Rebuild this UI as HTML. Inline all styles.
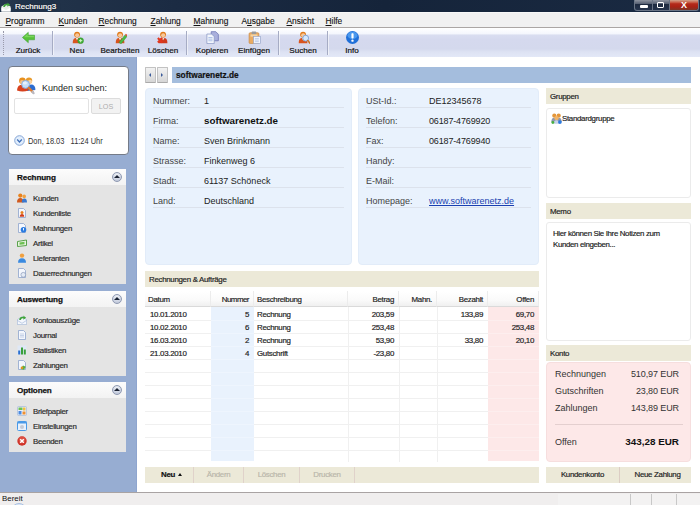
<!DOCTYPE html>
<html>
<head>
<meta charset="utf-8">
<title>Rechnung3</title>
<style>
*{box-sizing:border-box;margin:0;padding:0}
html,body{width:700px;height:505px;overflow:hidden;background:#fff}
body{font-family:"Liberation Sans",sans-serif;font-size:8px;color:#222;position:relative}
.abs{position:absolute}
.t{font-size:7.9px;letter-spacing:-.3px;white-space:nowrap;-webkit-text-stroke:.18px currentColor}
.a{font-size:9px;white-space:nowrap}
/* title bar */
#title{left:0;top:0;width:700px;height:12px;background:linear-gradient(90deg,#24364c 0,#1b2b43 25%,#15243a 55%,#1a2a42 100%)}
#title .cap{left:15px;top:1.2px;color:#fff;font-size:8.05px;line-height:12px;text-shadow:0 0 2px #000,0 0 4px #3a4a60;-webkit-text-stroke:.2px #fff}
#wbtn{left:634px;top:0;width:65px;height:11px;border:1px solid #6a7586;border-top:0;border-radius:0 0 3px 3px;background:linear-gradient(#8e94a0,#566072 38%,#1d2a40 44%,#26344c)}
#wbtn i{position:absolute;top:0;height:10px}
/* menu */
#menu{left:0;top:12px;width:700px;height:16px;background:#f1f1f1;border-top:1px solid #f8f8f8;border-bottom:1px solid #aba6a4}
#menu span{position:absolute;top:1.6px;margin-left:.5px;line-height:12px;font-size:8.4px;color:#111;white-space:nowrap;-webkit-text-stroke:.12px #111}
/* toolbar */
#tb{left:0;top:28px;width:700px;height:29px;background:linear-gradient(#fff 0,#f5f7fd 19%,#d9ddf0 25%,#d5d9ee 40%,#d4d9ed 72%,#dde2f3 82%,#e3e8f7 100%)}
#tb .b{position:absolute;top:0;width:0;height:30px}
#tb .b span{position:absolute;left:-30px;width:60px;top:17.7px;line-height:10px;text-align:center;font-size:8.1px;color:#111;white-space:nowrap;-webkit-text-stroke:.2px #111}
#tb .b svg{position:absolute;left:-6.5px;top:3px;width:13px;height:13px}
#tb .sep{position:absolute;top:3px;width:2px;height:24px;background:linear-gradient(90deg,#a6acc4 50%,rgba(255,255,255,.55) 50%)}
#tb .grip{position:absolute;left:3px;top:3px;width:1px;height:24px;border-left:1px dotted #99a}
/* sidebar */
#side{left:0;top:57px;width:137px;height:435px;background:#97add2}
#edge{left:136px;top:57px;width:1px;height:435px;background:#8ea5cf}
#search{left:8px;top:66px;width:121px;height:89px;background:#fff;border:1px solid #747b88;border-radius:4px}
.panel{left:9px;width:117px;background:#e4e4e4}
.panel .h{position:absolute;left:0;top:0;width:117px;height:16px;background:linear-gradient(#fcfcfc,#f3f3f3);-webkit-text-stroke:.25px #111;font-weight:bold;font-size:8.1px;line-height:17px;padding-left:8px;color:#111;letter-spacing:-.1px}
.panel .it{position:absolute;left:24px;line-height:11px;color:#2a2a2a}
.panel .ic{position:absolute;left:8px;width:10px;height:10px}
.panel .rb{position:absolute;right:4px;top:3px;width:10px;height:10px;border-radius:50%;border:1px solid #909ab2;background:radial-gradient(circle at 50% 25%,#f0f3f8,#b6bfd4)}
.panel .rb:after{content:"";position:absolute;left:1px;top:2px;border:3px solid transparent;border-top:0;border-bottom:3.2px solid #1a2233}
/* main */
#nav{left:145px;top:67px;width:23px;height:16px}
#nav i{position:absolute;top:0;width:11px;height:16px;background:linear-gradient(#f2f2f2,#d6d6d6);border:1px solid #c2c2c2;border-bottom-color:#aaa;border-radius:1px}
#nav i:after{content:"";position:absolute;top:5px;border:2px solid transparent}
#nav i.l:after{left:3.2px;border-left:0;border-right:2.5px solid #3a5a9a}
#nav i.r:after{left:3px;border-right:0;border-left:2.5px solid #3a5a9a}
#hdr{left:172px;top:67px;width:519px;height:16px;background:#a4bddd;font-weight:bold;font-size:8.3px;line-height:16px;padding-left:4px;color:#111;-webkit-text-stroke:.2px #111}
.info{top:88px;height:177px;background:#e9f2fd;border:1px solid #e2ecf9;border-radius:4px}
.info .r{position:absolute;left:7px;right:7px;height:20px;border-bottom:1px solid #dce2ec;line-height:12px;color:#222}
.info .r .l{position:absolute;left:0;top:7px;color:#444}
.info .r .v{position:absolute;top:7px}
.bh{background:#ece9d8;height:16px;line-height:17.5px;padding-left:4px;color:#222}
.wb{background:#fff;border:1px solid #ebebeb;border-radius:3px}
/* table */
#tbl{left:145px;top:291px;width:394px;height:171px;overflow:hidden}
#tbl .col{position:absolute;top:16px;height:154px}
#tbl .hl{position:absolute;left:0;width:394px;height:1px;background:#f0f0f0}
#tbl .vl{position:absolute;top:0;width:1px;height:171px;background:#f0f0f0}
#tbl .th{position:absolute;top:0;height:16px;line-height:17px;color:#222;background:linear-gradient(#fff,#fafafa 60%,#f0f0f0);border-bottom:1px solid #dadada;border-right:1px solid #ececec}
#tbl .td{position:absolute;line-height:13px;color:#222}
.rt{text-align:right}
#bb{left:145px;top:467px;width:394px;height:16px;background:#ece9d8}
#bb span{position:absolute;top:0;height:16px;line-height:16px;text-align:center;color:#b9b6aa;border-right:1px solid #e0d2ca}
#kb{left:546px;top:467px;width:145px;height:16px;background:#ece9d8}
#kb span{position:absolute;top:0;height:16px;line-height:16px;text-align:center;color:#222}
#konto{left:546px;top:362px;width:145px;height:100px;background:#fde8e8;border:1px solid #f6dede;border-radius:4px}
#konto div{position:absolute;line-height:12px;color:#333}
#status{left:0;top:492px;width:700px;height:13px;background:#f0eeee;border-top:1px solid #a9a3a3;font-size:7.9px;line-height:12px;padding-left:2px;color:#111;overflow:hidden}
#status i{position:absolute;top:1px;width:1px;height:12px;background:#c8c8c8}
</style>
</head>
<body>
<div id="title" class="abs">
<svg class="abs" style="left:1px;top:1.5px;width:10px;height:10px" viewBox="0 0 12 12"><path d="M.5 5.5 L6 2 L11.5 5.5 V11.5 H.5 Z" fill="#e9efe9"/><path d="M2.6 6 Q3 1.6 8 2.2 L7.4 .6 L11 3.2 L7.6 5.6 L7.6 4 Q5 3.6 4.6 6Z" fill="#3fa43a"/><path d="M.5 6.5 L6 10 L11.5 6.5 V11.5 H.5Z" fill="#fff"/></svg>
<div class="abs cap">Rechnung3</div>
<div id="wbtn" class="abs">
<i style="left:0;width:18px;border-right:1px solid #6a7586"></i>
<i style="left:18px;width:17px;border-right:1px solid #6a7586"></i>
<i style="left:35px;width:28px;border-radius:0 0 3px 0;background:linear-gradient(#d2a48c,#c65a44 25%,#b42a1a 38%,#a82214 68%,#7c3626)"></i>
<i style="left:5px;top:5px;width:8px;height:2.5px;background:#fff;border-radius:1px"></i>
<i style="left:22px;top:2px;width:7px;height:6px;border:1.5px solid #fff;border-radius:1px"></i>
<i style="left:42px;top:-1px;width:14px;height:12px;color:#fff;font:bold 9px/12px 'Liberation Sans',sans-serif;text-align:center;font-style:normal">X</i>
</div></div>
<div id="menu" class="abs"><span style="left:5px"><u>P</u>rogramm</span><span style="left:58px"><u>K</u>unden</span><span style="left:98px"><u>R</u>echnung</span><span style="left:150px"><u>Z</u>ahlung</span><span style="left:193px"><u>M</u>ahnung</span><span style="left:241px">A<u>u</u>sgabe</span><span style="left:286px"><u>A</u>nsicht</span><span style="left:325px"><u>H</u>ilfe</span></div>
<div id="tb" class="abs"><div class="grip"></div><div class="b" style="left:28px"><svg viewBox="0 0 12 12"><path d="M0.4 6 L5.8 1.2 V3.9 H11.6 V8.1 H5.8 V10.8Z" fill="#56c23a" stroke="#3e9e2c" stroke-width=".5"/><path d="M1.6 5.8 L5.2 2.6 V4.6 H11 V5.8Z" fill="#8ade6a" opacity=".7"/></svg><span>Zurück</span></div><div class="b" style="left:77px"><svg viewBox="0 0 12 12"><path d="M1.6 11.2 Q1.4 6.2 5.6 6.2 Q9.8 6.2 9.6 11.2Z" fill="#d9541e"/><path d="M4.3 6.4 L5.6 8.6 L6.9 6.4Z" fill="#f3e6d8"/><circle cx="5.6" cy="3.3" r="2.7" fill="#e07a18"/><circle cx="5.7" cy="3.9" r="1.9" fill="#f7c79a"/><circle cx="8.9" cy="8.9" r="2.7" fill="#3fae36" stroke="#2e8a28" stroke-width=".4"/><path d="M7.4 8.9 H10.4 M8.9 7.4 V10.4" stroke="#d8f4c8" stroke-width=".9"/></svg><span>Neu</span></div><div class="b" style="left:120px"><svg viewBox="0 0 12 12"><path d="M1.6 11.2 Q1.4 6.2 5.6 6.2 Q9.8 6.2 9.6 11.2Z" fill="#d9541e"/><path d="M4.3 6.4 L5.6 8.6 L6.9 6.4Z" fill="#f3e6d8"/><circle cx="5.6" cy="3.3" r="2.7" fill="#e07a18"/><circle cx="5.7" cy="3.9" r="1.9" fill="#f7c79a"/><path d="M4.6 10.6 L10.2 3.6 L12 5 L6.6 11.8Z" fill="#4cba44" stroke="#2f8a2a" stroke-width=".4"/><path d="M10.2 3.6 L11 2.6 L12.6 4 L12 5Z" fill="#e04a2a"/></svg><span>Bearbeiten</span></div><div class="b" style="left:163px"><svg viewBox="0 0 12 12"><path d="M1.6 11.2 Q1.4 6.2 5.6 6.2 Q9.8 6.2 9.6 11.2Z" fill="#cf3a1e"/><path d="M4.3 6.4 L5.6 8.6 L6.9 6.4Z" fill="#f3e6d8"/><circle cx="5.6" cy="3.3" r="2.7" fill="#e07a18"/><circle cx="5.7" cy="3.9" r="1.9" fill="#f7c79a"/><path d="M.8 6.4 L4.8 10.6 M4.8 6.4 L.8 10.6" stroke="#e2361e" stroke-width="1.9"/></svg><span>Löschen</span></div><div class="b" style="left:212px"><svg viewBox="0 0 12 12"><path d="M4.8 .6 H9 L11.4 3 V9 H4.8Z" fill="#a9afdc" stroke="#6c74b2" stroke-width=".7"/><path d="M.8 2.8 H5.2 L7.6 5.2 V11.6 H.8Z" fill="#f2f5fc" stroke="#8a98c4" stroke-width=".7"/><path d="M2.2 6 H6 M2.2 7.5 H6 M2.2 9 H6" stroke="#9db4e0" stroke-width=".7"/></svg><span>Kopieren</span></div><div class="b" style="left:254px"><svg viewBox="0 0 12 12"><rect x="1" y="1.6" width="9" height="10" rx="1" fill="#e9ab62" stroke="#c78a44" stroke-width=".6"/><rect x="3.4" y=".5" width="4.2" height="2.4" rx=".6" fill="#9a9a9a"/><rect x="2.3" y="3.2" width="6.4" height="2" fill="#f4d4a4"/><rect x="5.2" y="5" width="6.2" height="6.6" fill="#f0f4fc" stroke="#94a4c8" stroke-width=".6"/><path d="M6.4 7 H10 M6.4 8.4 H10 M6.4 9.8 H10" stroke="#a8bbe0" stroke-width=".6"/></svg><span>Einfügen</span></div><div class="b" style="left:303px"><svg viewBox="0 0 12 12"><path d="M1.6 11.2 Q1.4 6.2 5.6 6.2 Q9.8 6.2 9.6 11.2Z" fill="#d9541e"/><path d="M4.3 6.4 L5.6 8.6 L6.9 6.4Z" fill="#f3e6d8"/><circle cx="5.6" cy="3.3" r="2.7" fill="#e07a18"/><circle cx="5.7" cy="3.9" r="1.9" fill="#f7c79a"/><circle cx="8" cy="6.6" r="2.7" fill="#d4e7fb" stroke="#7fa4d6" stroke-width=".9"/><path d="M10 8.8 L11.8 11.2" stroke="#c8742a" stroke-width="1.5" stroke-linecap="round"/></svg><span>Suchen</span></div><div class="b" style="left:352px"><svg viewBox="0 0 12 12"><circle cx="6" cy="6" r="6" fill="#1f6fd8"/><ellipse cx="6" cy="4" rx="4.6" ry="3.4" fill="#5aa6f6" opacity=".75"/><rect x="5" y="2" width="2" height="5" rx=".7" fill="#fff"/><circle cx="6" cy="8.9" r="1.1" fill="#fff"/></svg><span>Info</span></div><div class="sep" style="left:52px"></div><div class="sep" style="left:186px"></div><div class="sep" style="left:278px"></div><div class="sep" style="left:327px"></div></div>
<div id="side" class="abs"></div><div id="edge" class="abs"></div>
<div id="search" class="abs">
<svg class="abs" style="left:8px;top:8.5px;width:19px;height:19px" viewBox="0 0 19 19"><circle cx="12" cy="4.6" r="3.2" fill="#e89a2a"/><circle cx="13" cy="5.8" r="2.1" fill="#f8d2a2"/><path d="M10 15 Q10 8.4 14 8.4 Q18.6 8.4 18.4 14Z" fill="#2c6cd0"/><circle cx="5.4" cy="4.8" r="3.3" fill="#e8901e"/><circle cx="5" cy="6" r="2" fill="#f4c088"/><path d="M0 14.6 Q0.2 8.6 5.6 8.6 Q11.4 8.6 11.4 14.6 Q5.6 16.4 0 14.6Z" fill="#d8421e"/><circle cx="8.6" cy="8.4" r="3.9" fill="#c6def8" stroke="#86aee2" stroke-width="1"/><ellipse cx="7.8" cy="7" rx="2.2" ry="1.5" fill="#e8f3fe" opacity=".9"/><path d="M11.8 11.8 L15.6 16" stroke="#e07a2a" stroke-width="2.3" stroke-linecap="round"/><path d="M15.4 15.8 L16.6 17.2" stroke="#b8b8c0" stroke-width="2.2" stroke-linecap="round"/></svg>
<div class="abs a" style="left:33px;top:15px;line-height:12px;color:#222">Kunden suchen:</div>
<div class="abs" style="left:5px;top:31px;width:75px;height:16px;border:1px solid #e2e2e2;border-radius:2px;background:#fff"></div>
<div class="abs" style="left:82px;top:31px;width:30px;height:16px;border:1px solid #dcdcdc;border-radius:2px;background:#f2f2f2;color:#adadad;font-size:7.2px;line-height:16px;text-align:center">LOS</div>
<svg class="abs" style="left:5px;top:68px;width:11px;height:11px" viewBox="0 0 11 11"><circle cx="5.5" cy="5.5" r="4.8" fill="#e2eefc" stroke="#86a6d6" stroke-width="1"/><path d="M3.2 4.5 L5.5 7 L7.8 4.5" fill="none" stroke="#3f6fb8" stroke-width="1.2"/></svg>
<div class="abs" style="left:19px;top:69px;font-size:8.8px;line-height:11px;color:#333;white-space:pre;transform:scaleX(.845);transform-origin:0 0">Don, 18.03   11:24 Uhr</div>
</div>
<div class="abs panel" style="top:169px;height:115px"><div class="h">Rechnung</div><div class="rb"></div><svg class="ic" style="top:24px" viewBox="0 0 10 10"><circle cx="3.3" cy="2.6" r="2.1" fill="#e8821e"/><path d="M0 9.5 Q0 5 3.3 5 Q6.6 5 6.6 9.5Z" fill="#d05a1e"/><circle cx="7.2" cy="3.4" r="1.8" fill="#f0a040"/><path d="M4.8 9.5 Q4.8 5.6 7.4 5.6 Q10 5.6 10 9.5Z" fill="#3a78d0"/></svg><div class="it t" style="top:24.1px">Kunden</div><svg class="ic" style="top:39px" viewBox="0 0 10 10"><path d="M1.5 .5 H6.5 L8.5 2.5 V9.5 H1.5Z" fill="#f4f7fd" stroke="#8ea3cc" stroke-width=".8"/><circle cx="5" cy="4.5" r="1.5" fill="#e8821e"/><path d="M2.8 8.8 Q2.8 6 5 6 Q7.2 6 7.2 8.8Z" fill="#d0401e"/></svg><div class="it t" style="top:39.1px">Kundenliste</div><svg class="ic" style="top:54px" viewBox="0 0 10 10"><path d="M1.5 .5 H6.5 L8.5 2.5 V9.5 H1.5Z" fill="#f4f7fd" stroke="#8ea3cc" stroke-width=".8"/><circle cx="6.5" cy="6.8" r="2.8" fill="#2a7be0"/><rect x="6.1" y="5" width=".9" height="2.4" fill="#fff"/></svg><div class="it t" style="top:54.1px">Mahnungen</div><svg class="ic" style="top:69px" viewBox="0 0 10 10"><path d="M.5 3.5 L9.5 2 V7.5 L.5 8.5Z" fill="#e8f4e0" stroke="#4a9a3a" stroke-width=".9"/><path d="M2.5 4.5 L7.5 3.8 V6.2 L2.5 6.8Z" fill="#6cc050"/></svg><div class="it t" style="top:69.1px">Artikel</div><svg class="ic" style="top:84px" viewBox="0 0 10 10"><circle cx="5" cy="2.6" r="2.2" fill="#f0a040"/><path d="M1 9.8 Q1 5.2 5 5.2 Q9 5.2 9 9.8Z" fill="#3a8ae0"/></svg><div class="it t" style="top:84.1px">Lieferanten</div><svg class="ic" style="top:99px" viewBox="0 0 10 10"><path d="M1.5 .5 H6.5 L8.5 2.5 V9.5 H1.5Z" fill="#f4f7fd" stroke="#8ea3cc" stroke-width=".8"/><circle cx="6.3" cy="6.8" r="2.4" fill="#e4ebf5" stroke="#8a9ab8" stroke-width=".7"/></svg><div class="it t" style="top:99.1px">Dauerrechnungen</div></div>
<div class="abs panel" style="top:291px;height:85px"><div class="h">Auswertung</div><div class="rb"></div><svg class="ic" style="top:24px" viewBox="0 0 12 12"><path d="M.5 5.5 L6 2 L11.5 5.5 V11.5 H.5 Z" fill="#f4f7fd" stroke="#9ab0d4" stroke-width=".7"/><path d="M2.6 6 Q3 1.6 8 2.2 L7.4 .6 L11 3.2 L7.6 5.6 L7.6 4 Q5 3.6 4.6 6Z" fill="#3fa43a"/><path d="M.5 6.5 L6 10 L11.5 6.5" fill="none" stroke="#9ab0d4" stroke-width=".7"/></svg><div class="it t" style="top:24.1px">Kontoauszüge</div><svg class="ic" style="top:39px" viewBox="0 0 10 10"><path d="M1.5 .5 H6.5 L8.5 2.5 V9.5 H1.5Z" fill="#f4f7fd" stroke="#8ea3cc" stroke-width=".8"/><path d="M3 4 H7 M3 5.5 H7 M3 7 H7" stroke="#a9bad8" stroke-width=".6"/></svg><div class="it t" style="top:39.1px">Journal</div><svg class="ic" style="top:54px" viewBox="0 0 10 10"><rect x=".5" y=".5" width="9" height="9" fill="#dfe8f6"/><rect x="1.2" y="5.5" width="2" height="4" fill="#2a6fd0"/><rect x="4" y="2.5" width="2" height="7" fill="#3aa03a"/><rect x="6.8" y="4.5" width="2" height="5" fill="#3aa03a"/></svg><div class="it t" style="top:54.1px">Statistiken</div><svg class="ic" style="top:69px" viewBox="0 0 10 10"><path d="M1.5 .5 H6.5 L8.5 2.5 V9.5 H1.5Z" fill="#f4f7fd" stroke="#8ea3cc" stroke-width=".8"/><path d="M3.5 9 L6 5.5 L8.8 6.8 L7 9.8Z" fill="#58b040"/><circle cx="5" cy="7.8" r="1.3" fill="#e8921e"/></svg><div class="it t" style="top:69.1px">Zahlungen</div></div>
<div class="abs panel" style="top:382px;height:70px"><div class="h">Optionen</div><div class="rb"></div><svg class="ic" style="top:24px" viewBox="0 0 10 10"><rect x=".5" y=".5" width="9" height="9" rx="1" fill="#eaf0fa" stroke="#9ab0d4" stroke-width=".6"/><rect x="1.5" y="1.5" width="4" height="2.5" fill="#6cc050"/><rect x="6" y="1.5" width="2.5" height="3" fill="#f0c040"/><rect x="1.5" y="5" width="3" height="3.5" fill="#4a8ae0"/><rect x="5.5" y="5.5" width="3" height="3" fill="#f09030"/></svg><div class="it t" style="top:24.1px">Briefpapier</div><svg class="ic" style="top:39px" viewBox="0 0 10 10"><rect x=".5" y=".5" width="9" height="9" rx="1" fill="#e8f1fc" stroke="#4a9ae8" stroke-width="1"/><rect x=".5" y=".5" width="9" height="2" fill="#4a9ae8"/><circle cx="5" cy="6" r="2" fill="#c4cad6"/></svg><div class="it t" style="top:39.1px">Einstellungen</div><svg class="ic" style="top:54px" viewBox="0 0 10 10"><circle cx="5" cy="5" r="4.7" fill="#d0342a"/><circle cx="5" cy="3.8" r="3.4" fill="#e86a5a" opacity=".5"/><path d="M3.2 3.2 L6.8 6.8 M6.8 3.2 L3.2 6.8" stroke="#fff" stroke-width="1.5"/></svg><div class="it t" style="top:54.1px">Beenden</div></div>
<div id="nav" class="abs"><i class="l" style="left:0"></i><i class="r" style="left:12px"></i></div><div id="hdr" class="abs">softwarenetz.de</div>
<div class="abs info" style="left:145px;width:207px"><div class="r a" style="top:-1px"><span class="l">Nummer:</span><span class="v" style="left:51px">1</span></div><div class="r a" style="top:19px"><span class="l">Firma:</span><span class="v" style="left:51px"><b style="font-size:9.8px;color:#111">softwarenetz.de</b></span></div><div class="r a" style="top:39px"><span class="l">Name:</span><span class="v" style="left:51px">Sven Brinkmann</span></div><div class="r a" style="top:59px"><span class="l">Strasse:</span><span class="v" style="left:51px">Finkenweg 6</span></div><div class="r a" style="top:79px"><span class="l">Stadt:</span><span class="v" style="left:51px">61137 Schöneck</span></div><div class="r a" style="top:99px"><span class="l">Land:</span><span class="v" style="left:51px">Deutschland</span></div></div>
<div class="abs info" style="left:358px;width:181px"><div class="r a" style="top:-1px"><span class="l">USt-Id.:</span><span class="v" style="left:63px">DE12345678</span></div><div class="r a" style="top:19px"><span class="l">Telefon:</span><span class="v" style="left:63px"><span style="letter-spacing:-.15px">06187-4769920</span></span></div><div class="r a" style="top:39px"><span class="l">Fax:</span><span class="v" style="left:63px"><span style="letter-spacing:-.15px">06187-4769940</span></span></div><div class="r a" style="top:59px"><span class="l">Handy:</span><span class="v" style="left:63px"></span></div><div class="r a" style="top:79px"><span class="l">E-Mail:</span><span class="v" style="left:63px"></span></div><div class="r a" style="top:99px"><span class="l">Homepage:</span><span class="v" style="left:63px"><u style="color:#1a3fb0">www.softwarenetz.de</u></span></div></div>
<div class="abs bh t" style="left:546px;top:88px;width:145px">Gruppen</div>
<div class="abs wb" style="left:546px;top:108px;width:145px;height:90px">
<svg class="abs" style="left:4px;top:3.5px;width:11px;height:11px" viewBox="0 0 10 10"><circle cx="3" cy="2.4" r="1.9" fill="#e4963a"/><circle cx="7" cy="2.4" r="1.9" fill="#e4963a"/><path d="M.3 8.4 Q.3 4.4 3 4.4 Q5 4.4 5 6 Q5 4.4 7 4.4 Q9.7 4.4 9.7 8.4Z" fill="#8f98ac"/><circle cx="5" cy="4.7" r="1.9" fill="#f2b466"/><path d="M2.4 9.7 Q2.4 6.5 5 6.5 Q7.6 6.5 7.6 9.7Z" fill="#c6d2e8"/><circle cx="1.7" cy="8.6" r="1.3" fill="#48b040"/><circle cx="8.1" cy="8.2" r="1.7" fill="#2a7ae0"/></svg>
<div class="abs t" style="left:15px;top:4px;line-height:11px">Standardgruppe</div></div>
<div class="abs bh t" style="left:546px;top:203px;width:145px">Memo</div>
<div class="abs wb" style="left:546px;top:222px;width:145px;height:119px"><div class="abs t" style="left:6px;top:4.5px;line-height:11.5px;letter-spacing:-.35px">Hier können Sie Ihre Notizen zum<br>Kunden eingeben...</div></div>
<div class="abs bh t" style="left:546px;top:345px;width:145px">Konto</div>
<div id="konto" class="abs">
<div class="a" style="left:8px;top:4.6px">Rechnungen</div><div class="a rt" style="right:11px;top:4.6px;letter-spacing:-.1px">510,97 EUR</div>
<div class="a" style="left:8px;top:21.6px">Gutschriften</div><div class="a rt" style="right:11px;top:21.6px;letter-spacing:-.1px">23,80 EUR</div>
<div class="a" style="left:8px;top:38.6px">Zahlungen</div><div class="a rt" style="right:11px;top:38.6px;letter-spacing:-.1px">143,89 EUR</div>
<div style="left:8px;top:61px;width:128px;height:1px;background:#e4cfcf"></div>
<div class="a" style="left:8px;top:72.6px">Offen</div><div class="rt" style="right:11px;top:72.6px;font-weight:bold;font-size:9.9px;color:#111;white-space:nowrap">343,28 EUR</div>
</div>
<div id="kb" class="abs t"><span style="left:0;width:74px;border-right:1px solid #dccdc4">Kundenkonto</span><span style="left:76px;width:71px">Neue Zahlung</span></div>
<div class="abs bh t" style="left:145px;top:271px;width:394px">Rechnungen &amp; Aufträge</div>
<div id="tbl" class="abs t"><div class="hl" style="top:29px"></div><div class="hl" style="top:42px"></div><div class="hl" style="top:55px"></div><div class="hl" style="top:68px"></div><div class="hl" style="top:81px"></div><div class="hl" style="top:94px"></div><div class="hl" style="top:107px"></div><div class="hl" style="top:120px"></div><div class="hl" style="top:133px"></div><div class="hl" style="top:146px"></div><div class="hl" style="top:159px"></div><div class="hl" style="top:172px"></div><div class="col" style="left:66px;width:43px;background:linear-gradient(#e9f2fd,#e9f2fd) 0 0/100% 13px no-repeat,repeating-linear-gradient(#eef5fe 0,#eef5fe 1px,#e9f2fd 1px,#e9f2fd 13px)"></div><div class="col" style="left:343px;width:51px;background:linear-gradient(#fde8e8,#fde8e8) 0 0/100% 13px no-repeat,repeating-linear-gradient(#fdeeee 0,#fdeeee 1px,#fde8e8 1px,#fde8e8 13px)"></div><div class="vl" style="left:203px"></div><div class="vl" style="left:254px"></div><div class="vl" style="left:292px"></div><div class="th" style="left:0px;width:66px;padding-left:3px">Datum</div><div class="th" style="left:66px;width:43px;padding-right:4px;text-align:right"><span style="letter-spacing:-.5px">Nummer</span></div><div class="th" style="left:109px;width:94px;padding-left:3px">Beschreibung</div><div class="th" style="left:203px;width:51px;padding-right:4px;text-align:right">Betrag</div><div class="th" style="left:254px;width:38px;padding-right:4px;text-align:right">Mahn.</div><div class="th" style="left:292px;width:51px;padding-right:4px;text-align:right">Bezahlt</div><div class="th" style="left:343px;width:51px;padding-right:4px;text-align:right">Offen</div><div class="td" style="left:5px;top:17px">10.01.2010</div><div class="td rt" style="left:66px;width:38px;top:17px">5</div><div class="td" style="left:112px;top:17px">Rechnung</div><div class="td rt" style="left:203px;width:46px;top:17px">203,59</div><div class="td rt" style="left:292px;width:46px;top:17px">133,89</div><div class="td rt" style="left:343px;width:46px;top:17px">69,70</div><div class="td" style="left:5px;top:30px">10.02.2010</div><div class="td rt" style="left:66px;width:38px;top:30px">6</div><div class="td" style="left:112px;top:30px">Rechnung</div><div class="td rt" style="left:203px;width:46px;top:30px">253,48</div><div class="td rt" style="left:343px;width:46px;top:30px">253,48</div><div class="td" style="left:5px;top:43px">16.03.2010</div><div class="td rt" style="left:66px;width:38px;top:43px">2</div><div class="td" style="left:112px;top:43px">Rechnung</div><div class="td rt" style="left:203px;width:46px;top:43px">53,90</div><div class="td rt" style="left:292px;width:46px;top:43px">33,80</div><div class="td rt" style="left:343px;width:46px;top:43px">20,10</div><div class="td" style="left:5px;top:56px">21.03.2010</div><div class="td rt" style="left:66px;width:38px;top:56px">4</div><div class="td" style="left:112px;top:56px">Gutschrift</div><div class="td rt" style="left:203px;width:46px;top:56px">-23,80</div></div>
<div id="bb" class="abs t"><span style="left:0;width:49px;color:#111;font-weight:bold;padding-left:5px">Neu <i style="display:inline-block;border:2.5px solid transparent;border-top:0;border-bottom:3px solid #111;vertical-align:1px;margin-left:1px"></i></span><span style="left:49px;width:50px">Ändern</span><span style="left:99px;width:56px">Löschen</span><span style="left:155px;width:55px">Drucken</span></div>
<div id="status" class="abs">Bereit<b style="position:absolute;left:11px;top:9.5px;width:16px;height:16px;border-radius:50%;border:1px solid #a9c0e2;background:#dbe6f6"></b><i style="left:558px;width:142px;height:12px;background:#f3f2f2"></i><i style="left:630px"></i><i style="left:651px"></i><i style="left:676px"></i></div>
</body>
</html>
